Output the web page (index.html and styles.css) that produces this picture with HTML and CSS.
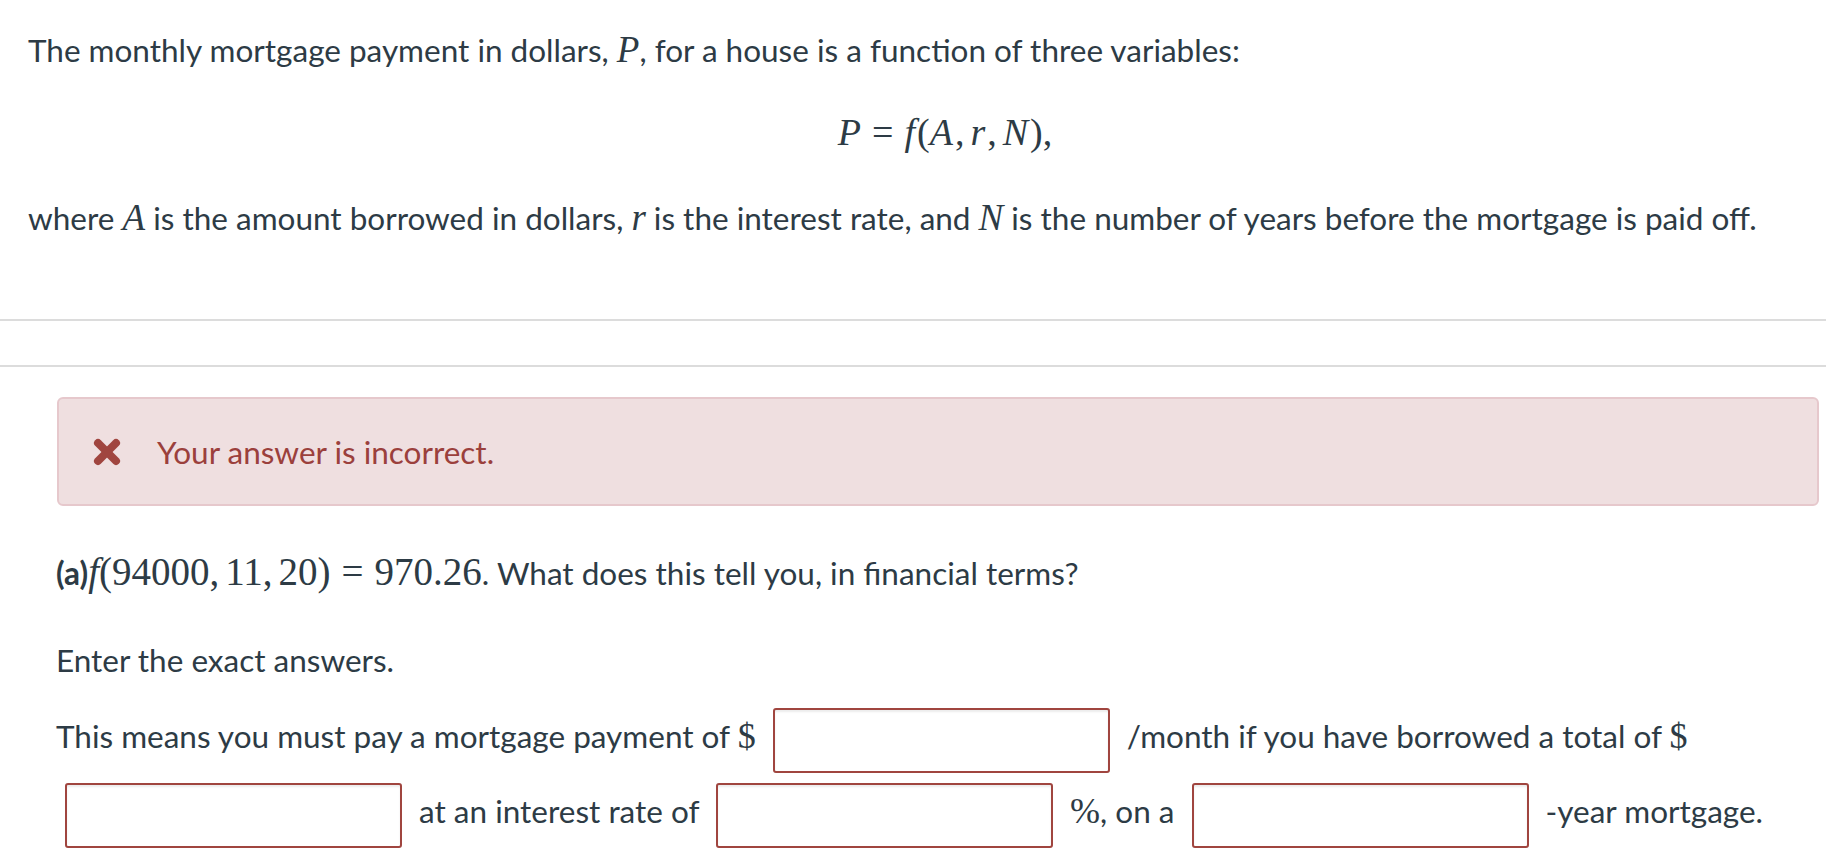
FILE: index.html
```html
<!DOCTYPE html>
<html>
<head>
<meta charset="utf-8">
<link rel="stylesheet" href="styles.css">
</head>
<body>
<div class="stem">
  <p class="line first">The monthly mortgage payment in dollars, <span class="mi">P</span>, for a house is a function of three variables:</p>
  <p class="formula"><span class="mi">P</span><span class="mo">=</span><span class="mi">f</span><span class="mn">(</span><span class="mi">A</span><span class="mn">,</span><span class="thin"></span><span class="mi">r</span><span class="mn">,</span><span class="thin"></span><span class="mi">N</span><span class="mn">),</span></p>
  <p class="line">where <span class="mi">A</span> is the amount borrowed in dollars, <span class="mi">r</span> is the interest rate, and <span class="mi">N</span> is the number of years before the mortgage is paid off.</p>
</div>
<div class="divider"></div>
<div class="part">
  <div class="alert">
    <svg class="x-icon" viewBox="0 0 28 28" width="28" height="28"><g stroke="#a0453f" stroke-width="8" stroke-linecap="round"><line x1="5" y1="5" x2="23" y2="23"/><line x1="23" y1="5" x2="5" y2="23"/></g></svg>
    <span class="alert-text">Your answer is incorrect.</span>
  </div>
  <p class="line q"><span class="label">(a)</span><span class="mi">f</span><span class="mn">(94000,</span><span class="thin"></span><span class="mn">11,</span><span class="thin"></span><span class="mn">20)</span><span class="mo">=</span><span class="mn">970.26</span>. What does this tell you, in financial terms?</p>
  <p class="line enter">Enter the exact answers.</p>
  <p class="answer">This means you must pay a mortgage payment of <span class="mn">$</span> <input class="box" type="text"> /month if you have borrowed a total of <span class="mn">$</span> <input class="box" type="text"> at an interest rate of <input class="box" type="text"> <span class="mn">%</span>, on a <input class="box" type="text"> -year mortgage.</p>
</div>
</body>
</html>
```
FILE: styles.css
```css
html, body {
  margin: 0;
  padding: 0;
  background: #ffffff;
}
body {
  font-family: Lato, "Noto Sans", sans-serif;
  color: #2d3b45;
  font-size: 31.5px;
}
p {
  margin: 0;
}
.stem {
  padding: 30px 20px 0 28px;
}
.line {
  line-height: 40px;
}
.mi {
  font-family: "Liberation Serif", "DejaVu Serif", serif;
  font-style: italic;
  font-size: 38px;
  line-height: 1;
}
.mn, .mo {
  font-family: "Liberation Serif", "DejaVu Serif", serif;
  font-size: 38px;
  line-height: 1;
}
.line .mi, .line .mn {
  font-size: 37px;
}
.q .mi, .q .mn, .q .mo {
  font-size: 39px;
}
.label {
  font-weight: 700;
}
.mo {
  margin: 0 11px;
}
.thin {
  display: inline-block;
  width: 6px;
}
.formula {
  text-align: center;
  margin: 43px 0 45px 56px;
  line-height: 40px;
}
.formula .mi + .mn {
  margin-left: 2px;
}
.divider {
  margin-top: 81px;
  height: 44px;
  border-top: 2px solid #dcdcdc;
  border-bottom: 2px solid #dcdcdc;
}
.part {
  padding: 30px 7px 40px 56px;
}
.alert {
  display: flex;
  align-items: center;
  gap: 36px;
  height: 105px;
  padding-left: 34px;
  margin-left: 1px;
  background: #efdfe0;
  border: 2px solid #e6c8cc;
  border-radius: 6px;
}
.x-icon {
  flex: none;
}
.alert-text {
  color: #9b403c;
  font-size: 31.5px;
}
.q {
  margin-top: 46px;
}
.enter {
  margin-top: 47px;
}
.answer {
  margin-top: 19px;
  line-height: 75px;
}
.answer .mn {
  font-size: 36px;
}
.box {
  width: 337px;
  height: 65px;
  box-sizing: border-box;
  margin: 0 9px;
  vertical-align: middle;
  border: 2px solid #a0453f;
  border-radius: 3px;
  background: #fff;
  box-shadow: inset 0 2px 2px rgba(0,0,0,0.08);
  padding: 0;
}
```
